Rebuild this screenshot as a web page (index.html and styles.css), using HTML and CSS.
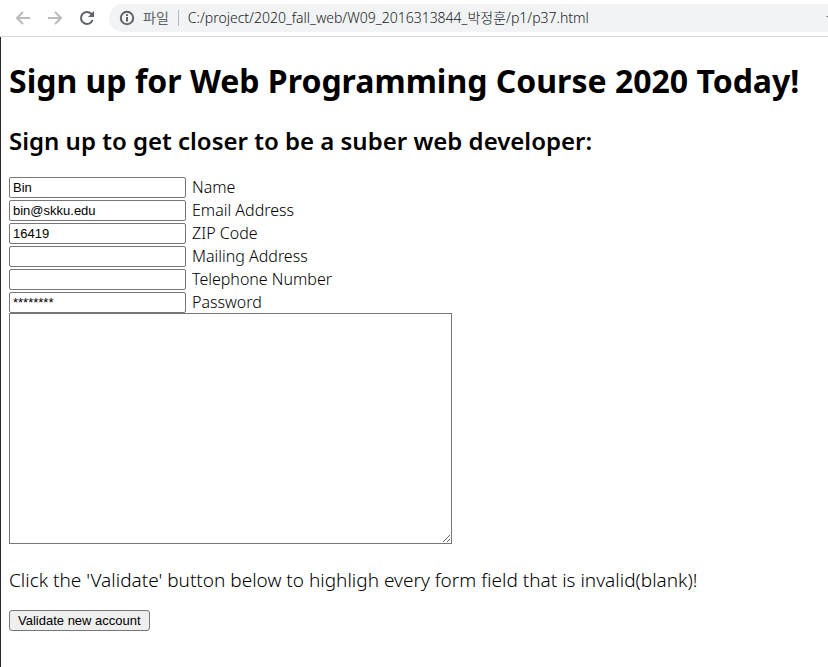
FILE: index.html
```html
<!DOCTYPE html>
<html lang="ko">
<head>
<meta charset="utf-8">
<title>Sign up</title>
<link rel="stylesheet" href="styles.css">
</head>
<body>
<header class="toolbar">
  <button class="nav" type="button" aria-label="Back" disabled><svg viewBox="0 0 16 16"><path d="M15 8H2M8 2L2 8l6 6"/></svg></button>
  <button class="nav" type="button" aria-label="Forward" disabled><svg viewBox="0 0 16 16"><path d="M1 8h13M8 2l6 6-6 6"/></svg></button>
  <button class="nav reload" type="button" aria-label="Reload"><svg viewBox="0 0 16 16"><path d="M13.6 10A6 6 0 1 1 12.3 3.8L14 5.500"/><path class="solid" d="M15 1v6H9z"/></svg></button>
  <div class="address">
    <svg class="info" viewBox="0 0 16 16"><circle cx="8" cy="8" r="6.200"/><path d="M8 7v4.500M8 4.300v1.700"/></svg>
    <span class="scheme">파일</span>
    <span class="divider"></span>
    <span class="url">C:/project/2020_fall_web/W09_2016313844_박정훈/p1/p37.html</span>
    <svg class="star" viewBox="0 0 16 16"><path class="solid" d="M8 1l2 5h5l-4 3 2 6-5-4-5 4 2-6-4-3h5z"/></svg>
  </div>
</header>
<main class="page">
  <h1>Sign up for Web Programming Course 2020 Today!</h1>
  <h2>Sign up to get closer to be a suber web developer:</h2>
  <form>
    <div class="fields">
      <div class="row"><input id="name" type="text" value="Bin"><label for="name">Name</label></div>
      <div class="row"><input id="email" type="text" value="bin@skku.edu"><label for="email">Email Address</label></div>
      <div class="row"><input id="zip" type="text" value="16419"><label for="zip">ZIP Code</label></div>
      <div class="row"><input id="mail" type="text"><label for="mail">Mailing Address</label></div>
      <div class="row"><input id="tel" type="text"><label for="tel">Telephone Number</label></div>
      <div class="row"><input id="pass" type="text" value="********"><label for="pass">Password</label></div>
    </div>
    <textarea aria-label="Comments" rows="15" cols="60"></textarea>
    <p>Click the 'Validate' button below to highligh every form field that is invalid(blank)!</p>
    <button class="submit" type="button">Validate new account</button>
  </form>
</main>
</body>
</html>
```
FILE: styles.css
```css
* { box-sizing: border-box; }
body {
  margin: 0;
  min-height: 100vh;
  display: flex;
  flex-direction: column;
  background: #fff;
  color: #000;
  font-family: "Noto Sans", "Noto Sans CJK KR", sans-serif;
}
.toolbar {
  display: flex;
  align-items: center;
  height: 37px;
  padding: 0 0 1px 15px;
  border-bottom: 1px solid #d5d7da;
  overflow: hidden;
}
.nav {
  flex: none;
  width: 16px;
  height: 16px;
  margin-right: 16px;
  padding: 0;
  border: 0;
  background: none;
}
svg {
  display: block;
  width: 16px;
  height: 16px;
  fill: none;
  stroke: #bababa;
  stroke-width: 2;
}
.reload { margin-right: 14px; }
.reload svg { stroke: #5f6368; }
.solid { fill: #5f6368; stroke: none; }
.address {
  position: relative;
  flex: 1;
  display: flex;
  align-items: center;
  height: 28px;
  padding-left: 10px;
  border-radius: 14px 0 0 14px;
  background: #f1f3f4;
  font-size: 14px;
  line-height: 18px;
  white-space: nowrap;
  overflow: hidden;
}
.info { stroke: #5f6368; }
.scheme { margin-left: 8px; color: #5f6368; }
.divider { width: 1px; height: 16px; margin: 0 9px; background: #b4b7ba; }
.url { color: #202124; font-weight: 300; }
.star { position: absolute; right: -13px; }
.page {
  flex: 1;
  padding: 0 8px 24px;
  border-left: 1px solid #2b2b2b;
}
h1 { margin: 22px 0; font-size: 32px; line-height: 44px; font-weight: 700; }
h2 { margin: 0 0 20px; font-size: 24px; line-height: 32px; font-weight: 600; }
.fields { display: grid; gap: 2px; }
.row { display: flex; align-items: flex-start; gap: 6px; height: 21px; }
.row label { font-size: 16px; line-height: 20px; font-weight: 300; }
input, textarea {
  border: 1px solid #767676;
  border-radius: 2px;
  background: #fff;
  color: #000;
  font: 13px "Liberation Sans", sans-serif;
}
input { width: 177px; height: 21px; padding: 1px 3px; }
textarea { display: block; width: 443px; height: 231px; border-radius: 0; }
p { margin: 24px 0 16px; font-size: 19px; line-height: 24px; font-weight: 300; }
.submit {
  height: 21px;
  padding: 0 8px;
  border: 1px solid #767676;
  border-radius: 3px;
  background: #efefef;
  color: #000;
  font: 13px "Liberation Sans", sans-serif;
}
```
